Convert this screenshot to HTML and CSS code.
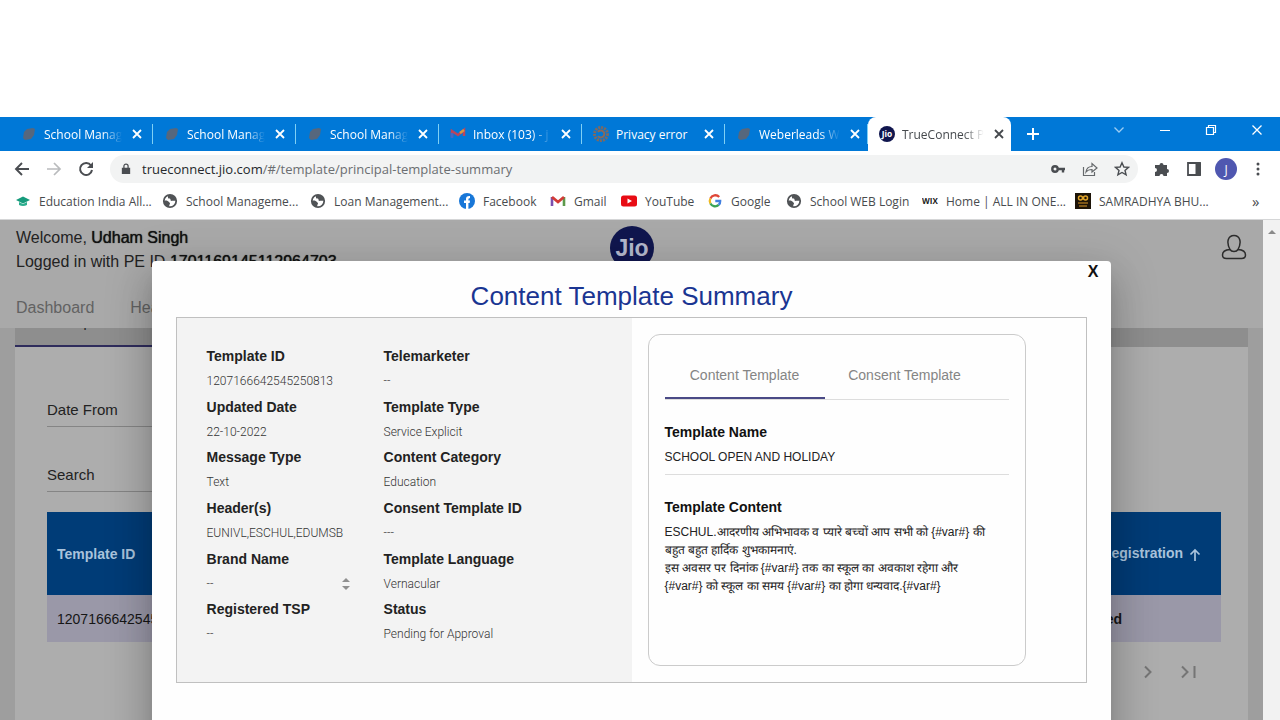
FILE: index.html
```
<!DOCTYPE html>
<html lang="en">
<head>
  <meta charset="utf-8">
  <title>TrueConnect Portal</title>
  <link rel="stylesheet" href="styles.css">
</head>
<body>
  <svg width="0" height="0" class="sprite">
    <symbol id="close" viewBox="0 0 16 16"><path d="M4 4l8 8M12 4l-8 8" stroke="currentColor" stroke-width="1.800" fill="none"/></symbol>
    <symbol id="blob" viewBox="0 0 16 16"><path d="M3 6l3-3 6-1 2 1-1 6-3 4-6 1-2-2z" fill="#56677d"/></symbol>
    <symbol id="globe" viewBox="0 0 16 16"><circle cx="8" cy="8" r="6.200" stroke="#505356" stroke-width="1.800" fill="none"/><path d="M2 8c2-1 4 0 5 1s1.500 2 .5 2.500l-.5 2.500C4 14 2 11 2 8zM6 2.500c3-1.500 7 1 8 5-1.500.8-2.500-.2-3.500.3S8 7.500 8.500 6.500 6.500 6 6 5z" fill="#505356"/></symbol>
    <symbol id="jio" viewBox="0 0 44 44"><circle cx="22" cy="22" r="22" fill="#10164e"/><text x="22" y="30" text-anchor="middle" font-size="23" font-weight="700" fill="currentColor">Jio</text></symbol>
  </svg>

  <div class="tab-bar">
    <div class="tab"><svg class="icon"><use href="#blob"/></svg><span>School Manag</span><button aria-label="Close tab"><svg class="icon"><use href="#close"/></svg></button></div>
    <div class="tab"><svg class="icon"><use href="#blob"/></svg><span>School Manag</span><button aria-label="Close tab"><svg class="icon"><use href="#close"/></svg></button></div>
    <div class="tab"><svg class="icon"><use href="#blob"/></svg><span>School Manag</span><button aria-label="Close tab"><svg class="icon"><use href="#close"/></svg></button></div>
    <div class="tab"><svg class="icon" viewBox="0 0 16 16"><path d="M2 11V5l6 4 6-5v6" stroke="#b8455e" stroke-width="2.500" fill="none"/><path d="M2 12V7" stroke="#4267c8" stroke-width="2.500"/><path d="M10 7l4-3" stroke="#d49a42" stroke-width="2.500"/></svg><span>Inbox (103) - j</span><button aria-label="Close tab"><svg class="icon"><use href="#close"/></svg></button></div>
    <div class="tab"><svg class="icon" viewBox="0 0 16 16"><circle cx="8" cy="8" r="6.500" stroke="#7d6a62" stroke-width="3" stroke-dasharray="2 1" fill="none"/><path d="M5 6a3.500 3.500 0 1 1 0 4" stroke="#8b6a58" stroke-width="2" fill="none"/></svg><span class="whole">Privacy error</span><button aria-label="Close tab"><svg class="icon"><use href="#close"/></svg></button></div>
    <div class="tab"><svg class="icon"><use href="#blob"/></svg><span>Weberleads W</span><button aria-label="Close tab"><svg class="icon"><use href="#close"/></svg></button></div>
    <div class="tab active"><svg class="icon favicon"><use href="#jio"/></svg><span>TrueConnect P</span><button aria-label="Close tab"><svg class="icon"><use href="#close"/></svg></button></div>
    <button class="new-tab" aria-label="New tab"><svg width="16" height="16" viewBox="0 0 16 16"><path d="M8 2v12M2 8h12" stroke="currentColor" stroke-width="2"/></svg></button>
    <div class="window-buttons">
      <button aria-label="Search tabs"><svg width="12" height="12" viewBox="0 0 12 12"><path d="M1.500 3.500L6 8l4.500-4.500" stroke="#9ccdf3" stroke-width="1.300" fill="none"/></svg></button>
      <button aria-label="Minimize"><svg width="12" height="12" viewBox="0 0 12 12"><path d="M1 6.500h10" stroke="currentColor"/></svg></button>
      <button aria-label="Restore"><svg width="12" height="12" viewBox="0 0 12 12"><path d="M1.500 3.500h7v7h-7zM3.500 3.500v-2h7v7h-2" stroke="currentColor" stroke-width="1.200" fill="none"/></svg></button>
      <button aria-label="Close"><svg width="12" height="12" viewBox="0 0 12 12"><path d="M1.500 1.500l9 9M10.500 1.500l-9 9" stroke="currentColor" stroke-width="1.300"/></svg></button>
    </div>
  </div>

  <div class="toolbar">
    <button aria-label="Back"><svg width="16" height="16" viewBox="0 0 16 16"><path d="M15 8H2M8 2L2 8l6 6" stroke="#4a4d51" stroke-width="1.900" fill="none"/></svg></button>
    <button aria-label="Forward"><svg width="16" height="16" viewBox="0 0 16 16"><path d="M1 8h13M8 2l6 6-6 6" stroke="#b9bbbd" stroke-width="1.700" fill="none"/></svg></button>
    <button aria-label="Reload"><svg width="16" height="16" viewBox="0 0 16 16"><path d="M13 4.500A6 6 0 1 0 14 9" stroke="#4a4d51" stroke-width="2" fill="none"/><path d="M15 1v6H9z" fill="#4a4d51"/></svg></button>
    <div class="address">
      <svg width="10" height="12" viewBox="0 0 12 14"><path d="M1 5.500h10V13H1z" fill="#4a4d51"/><path d="M3.500 6V3.500a2.500 2.500 0 0 1 5 0V6" stroke="#4a4d51" stroke-width="1.500" fill="none"/></svg>
      <a href="#"><span>trueconnect.jio.com</span>/#/template/principal-template-summary</a>
      <button aria-label="Passwords"><svg width="16" height="16" viewBox="0 0 16 16"><circle cx="5" cy="8" r="2.700" stroke="#4a4d51" stroke-width="2.400" fill="none"/><path d="M8 8h7M13 8v3.500" stroke="#4a4d51" stroke-width="2.400"/></svg></button>
      <button aria-label="Share"><svg width="16" height="16" viewBox="0 0 16 16"><path d="M1.500 6v8.500h11V11M4 11c.5-4 3-5.500 6-5.500V2.500L15 7l-5 4V8.500C7.500 8.500 5.500 9 4 11z" stroke="#66696c" stroke-width="1.200" fill="none"/></svg></button>
      <button aria-label="Bookmark"><svg width="16" height="16" viewBox="0 0 16 16"><path d="M8 1.800l1.900 4.200 4.600.4-3.500 3 1.100 4.500L8 11.500l-4.100 2.400L5 9.400l-3.500-3L6.100 6z" stroke="#4a4d51" stroke-width="1.400" fill="none"/></svg></button>
    </div>
    <button aria-label="Extensions"><svg width="16" height="16" viewBox="0 0 16 16"><path d="M1 4h4.500a2 2 0 1 1 4 0H13v4a2 2 0 1 1 0 4v3H9.500a2 2 0 0 0-4 0H1v-4a2 2 0 0 0 0-4z" fill="#4a4d51"/></svg></button>
    <button aria-label="Side panel"><svg width="16" height="16" viewBox="0 0 16 16"><path d="M2 2h12v12H2z" stroke="#4a4d51" stroke-width="1.800" fill="none"/><path d="M9.500 2H15v12H9.500z" fill="#4a4d51"/></svg></button>
    <button class="profile">J</button>
    <button aria-label="Menu"><svg width="16" height="16" viewBox="0 0 16 16" fill="#4a4d51"><circle cx="8" cy="3" r="1.500"/><circle cx="8" cy="8" r="1.500"/><circle cx="8" cy="13" r="1.500"/></svg></button>
  </div>

  <nav class="bookmarks">
    <a href="#"><svg class="icon" viewBox="0 0 16 16"><path d="M8 3.500L15 7l-7 3.500L1 7z" fill="#169b7c"/><path d="M4 9v3q4 2 8 0V9l-4 2z" fill="#2cae8e"/></svg>Education India All...</a>
    <a href="#"><svg class="icon"><use href="#globe"/></svg>School Manageme...</a>
    <a href="#"><svg class="icon"><use href="#globe"/></svg>Loan Management...</a>
    <a href="#"><svg class="icon" viewBox="0 0 16 16"><circle cx="8" cy="8" r="8" fill="#1877d8"/><path d="M7 16v-6H5V7.500h2V6c0-2.200 1.200-3.200 4-3v2.200C9.800 5.200 9.400 5.500 9.400 6.500v1H11L10.700 10H9.400v6z" fill="#fff"/></svg>Facebook</a>
    <a href="#"><svg class="icon" viewBox="0 0 16 16"><path d="M2 13V4" stroke="#7b4fae" stroke-width="2.600"/><path d="M14 13V4" stroke="#5d9a4c" stroke-width="2.600"/><path d="M2 4l6 5 6-5" stroke="#d33a35" stroke-width="2.800" fill="none"/></svg>Gmail</a>
    <a href="#"><svg class="icon" viewBox="0 0 16 16"><rect y="2.500" width="16" height="11" rx="2.500" fill="#e80c14"/><path d="M6.500 5.500v5L11 8z" fill="#fff"/></svg>YouTube</a>
    <a href="#"><svg class="icon" viewBox="0 0 16 16" fill="none" stroke-width="2.300"><path d="M12.200 4A5.300 5.300 0 0 0 3.400 5.500" stroke="#df4638"/><path d="M3.400 5.500a5.300 5.300 0 0 0 0 5" stroke="#efb81f"/><path d="M3.400 10.500a5.300 5.300 0 0 0 8.300 1.400" stroke="#3aa457"/><path d="M11.700 11.900A5.300 5.300 0 0 0 13.200 8H8.300" stroke="#4180e0"/></svg>Google</a>
    <a href="#"><svg class="icon"><use href="#globe"/></svg>School WEB Login</a>
    <a href="#"><svg class="icon" viewBox="0 0 16 16"><text x="0" y="11" font-size="8" font-weight="700" fill="#222">WIX</text></svg>Home | ALL IN ONE...</a>
    <a href="#"><svg class="icon" viewBox="0 0 16 16"><path d="M0 0h16v16H0z" fill="#1d1408"/><circle cx="5.500" cy="5" r="2" stroke="#dfa42a" stroke-width="1.500" fill="none"/><circle cx="10.500" cy="5" r="2" stroke="#dfa42a" stroke-width="1.500" fill="none"/><path d="M3 10h10M4 13h8" stroke="#9a6b1c" stroke-width="1.500"/></svg>SAMRADHYA BHU...</a>
    <button aria-label="More bookmarks">»</button>
  </nav>

  <div class="viewport">
    <div class="page">
      <header class="page-header">
        <div class="welcome">Welcome, <b>Udham Singh</b><br>Logged in with PE ID <b>1701169145112964703</b></div>
        <svg class="logo"><use href="#jio"/></svg>
        <svg class="user" width="26" height="26" viewBox="0 0 26 26"><path d="M9 15.500C5 8 7 1.500 13 1.500S21 8 17 15.500c4 .3 7.500 2 7.500 5.500 0 2.300-1.200 3.500-4 3.500h-15c-2.800 0-4-1.200-4-3.500 0-3.500 3.500-5.200 7.500-5.500 1.500 2.500 6.500 2.500 8 0" stroke="#2c2c2c" stroke-width="1.500" fill="none"/></svg>
        <nav>
          <a href="#">Dashboard</a>
          <a href="#">Header</a>
        </nav>
      </header>
      <main class="page-body">
        <div class="page-tabs"><a href="#">Template</a></div>
        <div class="field"><label for="date-from">Date From</label><input id="date-from" type="text"></div>
        <div class="field"><label for="search">Search</label><input id="search" type="text"></div>
        <table class="templates">
          <thead>
            <tr><th>Template ID</th><th class="last">Registration <svg width="12" height="14" viewBox="0 0 12 14"><path d="M6 13V2M1.500 6.500L6 2l4.500 4.500" stroke="currentColor" stroke-width="1.700" fill="none"/></svg></th></tr>
          </thead>
          <tbody>
            <tr><td>1207166642545250813</td><td class="last">Registered</td></tr>
          </tbody>
        </table>
        <div class="pager">
          <button aria-label="Next page"><svg width="16" height="16" viewBox="0 0 16 16"><path d="M5 2.500L10.500 8 5 13.500" stroke="currentColor" stroke-width="2" fill="none"/></svg></button>
          <button aria-label="Last page"><svg width="16" height="16" viewBox="0 0 16 16"><path d="M2 2.500L7.500 8 2 13.500M14.500 2v12" stroke="currentColor" stroke-width="2" fill="none"/></svg></button>
        </div>
      </main>

      <div class="modal" role="dialog" aria-labelledby="modal-title">
        <button class="modal-close">X</button>
        <h1 id="modal-title">Content Template Summary</h1>
        <div class="summary">
          <dl class="details">
            <div><dt>Template ID</dt><dd>1207166642545250813</dd></div>
            <div><dt>Telemarketer</dt><dd>--</dd></div>
            <div><dt>Updated Date</dt><dd>22-10-2022</dd></div>
            <div><dt>Template Type</dt><dd>Service Explicit</dd></div>
            <div><dt>Message Type</dt><dd>Text</dd></div>
            <div><dt>Content Category</dt><dd>Education</dd></div>
            <div><dt>Header(s)</dt><dd>EUNIVL,ESCHUL,EDUMSB</dd></div>
            <div><dt>Consent Template ID</dt><dd>---</dd></div>
            <div><dt>Brand Name</dt><dd class="brand">-- <svg width="8" height="12" viewBox="0 0 8 12"><path d="M0 4l4-4 4 4zM0 8l4 4 4-4z" fill="#8f8f8f"/></svg></dd></div>
            <div><dt>Template Language</dt><dd>Vernacular</dd></div>
            <div><dt>Registered TSP</dt><dd>--</dd></div>
            <div><dt>Status</dt><dd>Pending for Approval</dd></div>
          </dl>
          <div class="content">
            <div class="card">
              <div class="card-tabs">
                <button class="selected">Content Template</button>
                <button>Consent Template</button>
              </div>
              <h2>Template Name</h2>
              <p class="name">SCHOOL OPEN AND HOLIDAY</p>
              <h2>Template Content</h2>
              <p class="message" lang="hi">ESCHUL.आदरणीय अभिभावक व प्यारे बच्चों आप सभी को {#var#} की<br>बहुत बहुत हार्दिक शुभकामनाएं.<br>इस अवसर पर दिनांक {#var#} तक का स्कूल का अवकाश रहेगा और<br>{#var#} को स्कूल का समय {#var#} का होगा धन्यवाद.{#var#}</p>
            </div>
          </div>
        </div>
      </div>
    </div>
    <div class="scrollbar"><svg width="8" height="4" viewBox="0 0 8 4"><path d="M0 4l4-4 4 4z" fill="#8a8a8a"/></svg></div>
  </div>
</body>
</html>
```
FILE: styles.css
```
* {
  box-sizing: border-box;
}

body {
  margin: 0;
  padding-top: 117px;
  height: 100vh;
  display: flex;
  flex-direction: column;
  overflow: hidden;
  background: #fff;
  font-family: "Liberation Sans", Arial, sans-serif;
}

button {
  padding: 0;
  border: none;
  background: none;
  color: inherit;
  font: inherit;
  cursor: pointer;
}

a {
  color: inherit;
  text-decoration: none;
}

svg {
  flex: none;
}

.sprite {
  position: absolute;
}

.icon {
  width: 16px;
  height: 16px;
}

/* browser */
.tab-bar,
.toolbar,
.bookmarks {
  flex: none;
  display: flex;
  align-items: center;
  font-family: "Open Sans", "Noto Sans", sans-serif;
  font-size: 12px;
}

.tab-bar {
  height: 34px;
  padding-left: 10px;
  background: #0078d7;
  color: #fff;
}

.tab {
  flex: 0 1 143px;
  min-width: 0;
  height: 34px;
  display: flex;
  align-items: center;
  gap: 7px;
  padding: 0 8px 0 11px;
}

.tab:not(.active) {
  background: linear-gradient(#7fd0f5, #7fd0f5) right / 1px 20px no-repeat;
}

.tab span {
  flex: 1;
  white-space: nowrap;
  -webkit-mask-image: linear-gradient(to right, #000 75%, transparent);
  mask-image: linear-gradient(to right, #000 75%, transparent);
}

.tab .whole {
  -webkit-mask-image: none;
  mask-image: none;
}

.tab button,
.window-buttons,
.toolbar button {
  display: flex;
  align-items: center;
  justify-content: center;
}

.tab.active {
  background: #fff;
  color: #45494d;
  border-radius: 8px 8px 0 0;
}

.favicon {
  color: #fff;
}

.new-tab {
  display: flex;
  margin-left: 14px;
}

.window-buttons {
  margin-left: auto;
  align-self: flex-start;
}

.window-buttons button {
  width: 46px;
  height: 28px;
}

.toolbar {
  height: 36px;
  gap: 16px;
  padding: 0 14px;
}

.address {
  flex: 1;
  height: 28px;
  display: flex;
  align-items: center;
  gap: 16px;
  padding: 0 8px 0 11px;
  border-radius: 14px;
  background: #f2f3f3;
}

.address a {
  flex: 1;
  margin-left: -5px;
  color: #6b6e71;
  font-size: 13px;
  white-space: nowrap;
}

.address a span {
  color: #25282b;
}

.toolbar .profile {
  width: 22px;
  height: 22px;
  margin: 0 -3px;
  border-radius: 50%;
  background: #4f57b0;
  color: #fff;
}

.bookmarks {
  height: 33px;
  display: grid;
  grid-template-columns: 147fr 148fr 149fr 91fr 71fr 86fr 79fr 136fr 153fr 167fr 38fr;
  padding: 0 0 4px 15px;
  border-bottom: 1px solid #d5d6d7;
  color: #484b4e;
}

.bookmarks a {
  min-width: 0;
  display: flex;
  align-items: center;
  gap: 8px;
  white-space: nowrap;
}

.bookmarks button {
  padding-left: 10px;
  font-size: 15px;
  text-align: left;
}

/* page behind the dialog */
.viewport {
  flex: 1;
  min-height: 0;
  display: flex;
}

.page {
  flex: 1;
  position: relative;
  display: flex;
  flex-direction: column;
  overflow: hidden;
  background: #9e9e9e;
  color: #222;
}

.scrollbar {
  width: 17px;
  padding-top: 7px;
  background: #f2f2f2;
  text-align: center;
  line-height: 4px;
}

.page-header {
  display: grid;
  grid-template-columns: 1fr 44px 1fr;
  height: 108px;
  padding: 6px 16px 0;
  background: #a9a9a9;
}

.welcome {
  line-height: 24px;
  font-size: 16px;
  white-space: nowrap;
}

.welcome b {
  color: #111;
  font-weight: normal;
  text-shadow: 0 0 1px #111;
}

.logo {
  width: 44px;
  height: 44px;
  color: #b4b8cc;
}

.user {
  justify-self: end;
  margin-top: 8px;
}

.page-header nav {
  grid-column: 1 / -1;
  display: flex;
  gap: 36px;
  padding-top: 14px;
  color: #626262;
  font-size: 16px;
}

.page-body {
  flex: 1;
  margin: 0 15px;
  background: #adadad;
}

.page-tabs {
  height: 19px;
  overflow: hidden;
  background: linear-gradient(#2f2c5c, #2f2c5c) left bottom / 160px 2px no-repeat #8e8e8e;
}

.page-tabs a {
  display: block;
  margin: -14px 0 0 42px;
  font-size: 14px;
}

.field {
  display: flex;
  flex-direction: column;
  width: 25%;
  margin: 0 32px 38px;
  font-size: 15px;
}

.page-tabs + .field {
  margin-top: 53px;
}

.field + .field {
  margin-bottom: 20px;
}

.field label {
  line-height: 20px;
}

.field input {
  height: 7px;
  padding: 0;
  border: none;
  border-bottom: 1px solid #858585;
  background: none;
}

.templates {
  width: calc(100% - 59px);
  margin-left: 32px;
  border-collapse: collapse;
  font-size: 14px;
}

.templates th {
  height: 83px;
  padding: 0 20px 0 10px;
  background: #003c77;
  color: #a9c3dc;
  text-align: left;
}

.templates td {
  height: 47px;
  padding: 0 99px 0 10px;
  background: #9a98a8;
  color: #161616;
}

.templates .last {
  text-align: right;
}

.templates th svg {
  margin-left: 2px;
  vertical-align: middle;
}

.templates td.last {
  font-weight: bold;
}

.pager {
  display: flex;
  justify-content: flex-end;
  gap: 24px;
  padding: 22px 52px 0;
  color: #757575;
}

/* dialog */
.modal {
  position: absolute;
  top: 41px;
  left: 12%;
  right: 12%;
  bottom: -40px;
  padding: 20px 24px;
  border-radius: 4px 4px 0 0;
  background: #fefefe;
  box-shadow: 0 11px 15px -7px rgba(0, 0, 0, 0.2), 0 24px 38px 3px rgba(0, 0, 0, 0.14), 0 9px 46px 8px rgba(0, 0, 0, 0.12);
}

.modal-close {
  position: absolute;
  top: 2px;
  right: 13px;
  color: #111;
  font-size: 16px;
  font-weight: bold;
}

.modal h1 {
  margin: 0 0 5px;
  color: #1a3592;
  font-size: 26px;
  font-weight: 400;
  line-height: 31px;
  text-align: center;
}

.summary {
  display: grid;
  grid-template-columns: 1fr 1fr;
  border: 1px solid #c0c0c0;
}

.details {
  display: grid;
  grid-template-columns: 177px 1fr;
  grid-auto-rows: 1fr;
  margin: 0;
  padding: 26px 30px 34px;
  background: #f3f3f3;
}

.details dt {
  color: #222;
  font-size: 14px;
  font-weight: bold;
  line-height: 25px;
}

.details dd {
  width: 143px;
  margin: 0;
  color: #333;
  font-family: Roboto, sans-serif;
  font-size: 12px;
  font-weight: 300;
  line-height: 25px;
}

.details .brand {
  display: flex;
  align-items: center;
  justify-content: space-between;
}

.content {
  padding: 16px 60px 16px 16px;
}

.card {
  min-height: 332px;
  padding: 16px;
  border: 1px solid #cbcbcb;
  border-radius: 12px;
}

.card-tabs {
  display: flex;
  border-bottom: 1px solid #ddd;
}

.card-tabs button {
  width: 160px;
  height: 48px;
  border-bottom: 2px solid transparent;
  padding-top: 2px;
  color: #858585;
  font-size: 14px;
}

.card-tabs .selected {
  border-color: #4a4a86;
}

.card h2 {
  margin: 20px 0 4px;
  color: #111;
  font-size: 14px;
  line-height: 24px;
}

.card p {
  margin: 0;
  color: #222;
  font-size: 12px;
  line-height: 18px;
  white-space: nowrap;
}

.card .name {
  padding-bottom: 8px;
  border-bottom: 1px solid #ddd;
}
```
